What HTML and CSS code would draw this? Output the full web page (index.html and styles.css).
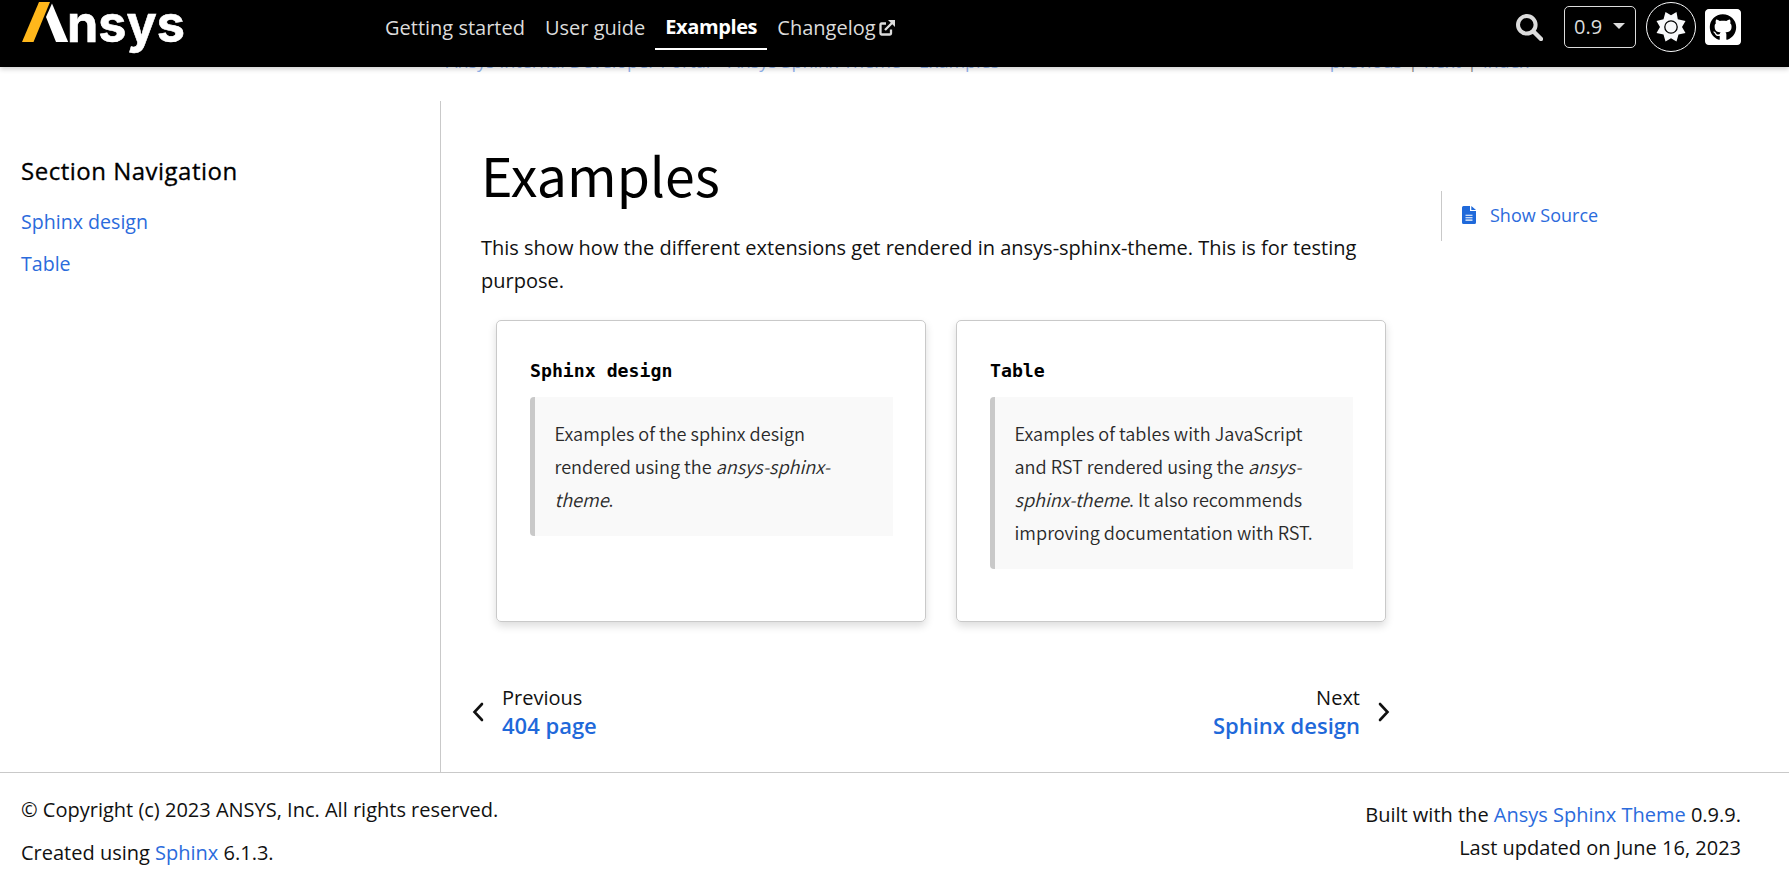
FILE: index.html
```html
<!DOCTYPE html>
<html lang="en">
<head>
<meta charset="utf-8">
<title>Examples — Ansys Sphinx Theme</title>
<link rel="stylesheet" href="styles.css">
</head>
<body>
<header class="header">
  <svg class="logo" width="166" height="56" viewBox="0 0 166 56" role="img" aria-label="Ansys">
    <path d="M17 2h11L11.500 42H0z" fill="#ffb71b"/>
    <path d="M30 3.500 46.200 42H34L24 17z" fill="#fff"/>
    <text class="logo-text" x="45" y="42" textLength="118" lengthAdjust="spacingAndGlyphs">nsys</text>
  </svg>
  <nav class="nav">
    <a class="nav-link"><span>Getting started</span></a>
    <a class="nav-link"><span>User guide</span></a>
    <a class="nav-link nav-active"><span>Examples</span></a>
    <a class="nav-link"><span>Changelog</span><svg class="ext" width="16" height="16" viewBox="0 0 16 16"><path d="M7 3.500H2.500q-1 0-1 1v9q0 1 1 1h8.500q1 0 1-1V9.500M6 10 13 3" fill="none" stroke="#dcdcdc" stroke-width="2.300"/><path d="M9 0h7v7z" fill="#dcdcdc"/></svg></a>
  </nav>
  <div class="tools">
    <svg class="search" width="27" height="27" viewBox="0 0 27 27"><circle cx="10.800" cy="10.800" r="8.800" fill="none" stroke="#dcdcdc" stroke-width="4"/><path d="M17.500 17.500 25 25" stroke="#dcdcdc" stroke-width="4.400" stroke-linecap="round"/></svg>
    <div class="version"><span>0.9</span><span class="caret"></span></div>
    <div class="theme"><svg width="30" height="30" viewBox="0 0 30 30"><path d="M15 3.200 20.500 0 21.800 7.200 29.500 9 26 15 29.500 21 22.500 22.500 20.500 29.500 15 26.200 9.500 29.500 7.500 22.500 .5 21 4 15 .5 9 7.500 7.200 9.500 0z" fill="#f8f9fa"/><circle cx="15" cy="15" r="6.200" fill="#f8f9fa" stroke="#000" stroke-width="1.300"/></svg></div>
    <svg class="github" width="37" height="37" viewBox="0 32 448 448"><path fill="#fff" d="M400 32H48C21.500 32 0 53.500 0 80v352c0 26.500 21.500 48 48 48h352c26.500 0 48-21.500 48-48V80c0-26.500-21.500-48-48-48zM277.300 415.700c-8.400 1.500-11.500-3.700-11.500-8 0-5.400.2-33 .2-55.300 0-15.600-5.200-25.500-11.300-30.700 37-4.100 76-9.200 76-73.100 0-18.200-6.500-27.300-17.100-39 1.700-4.300 7.400-22-1.700-45-13.900-4.300-45.700 17.900-45.700 17.900-13.200-3.700-27.500-5.600-41.600-5.600-14.100 0-28.400 1.900-41.600 5.600 0 0-31.800-22.200-45.700-17.900-9.100 22.900-3.500 40.600-1.700 45-10.600 11.700-15.600 20.800-15.600 39 0 63.600 37.300 69 74.300 73.100-4.800 4.300-9.100 11.700-10.600 22.300-9.500 4.300-33.800 11.700-48.300-13.900-9.100-15.800-25.500-17.100-25.500-17.100-16.200-.2-1.100 10.200-1.100 10.200 10.800 5 18.400 24.200 18.400 24.200 9.700 29.700 56.100 19.700 56.100 19.700 0 13.900.2 36.500.2 40.600 0 4.300-3 9.500-11.500 8-66-22.100-112.200-84.900-112.200-158.300 0-91.800 70.200-161.500 162-161.500S388 165.600 388 257.400c.1 73.400-44.700 136.300-110.700 158.300z"/></svg>
  </div>
</header>

<div class="related">
  <div class="crumbs"><a>Ansys Internal Developer Portal</a><a>Ansys Sphinx Theme</a><a>Examples</a></div>
  <div class="rel-links"><a>previous</a><span class="bar">|</span><a>next</a><span class="bar">|</span><a>index</a></div>
</div>

<div class="page">
  <aside class="sidebar">
    <p class="side-title">Section Navigation</p>
    <a class="side-link">Sphinx design</a>
    <a class="side-link">Table</a>
  </aside>
  <main class="main">
    <h1 class="title">Examples</h1>
    <p class="intro">This show how the different extensions get rendered in ansys-sphinx-theme. This is for testing purpose.</p>
    <div class="cards">
      <section class="card">
        <h2 class="card-title">Sphinx design</h2>
        <blockquote class="quote">Examples of the sphinx design<br>rendered using the <em>ansys-sphinx-<br>theme</em>.</blockquote>
      </section>
      <section class="card">
        <h2 class="card-title">Table</h2>
        <blockquote class="quote">Examples of tables with JavaScript<br>and RST rendered using the <em>ansys-<br>sphinx-theme</em>. It also recommends<br>improving documentation with RST.</blockquote>
      </section>
    </div>
    <div class="pager">
      <a class="pager-item"><svg width="12" height="20" viewBox="0 0 12 20"><path d="M10 2 2.500 10 10 18" fill="none" stroke="#111" stroke-width="2.600" stroke-linecap="round"/></svg>
        <span class="pager-text"><span class="pager-label">Previous</span><span class="pager-name">404 page</span></span></a>
      <a class="pager-item pager-next"><span class="pager-text"><span class="pager-label">Next</span><span class="pager-name">Sphinx design</span></span>
        <svg width="12" height="20" viewBox="0 0 12 20"><path d="M2 2 9.500 10 2 18" fill="none" stroke="#111" stroke-width="2.600" stroke-linecap="round"/></svg></a>
    </div>
  </main>
  <aside class="toc">
    <a class="source"><svg width="14" height="18" viewBox="0 0 14 18"><path d="M1.500 0H8v5h6v11.500q0 1.500-1.500 1.500h-11Q0 18 0 16.500v-15Q0 0 1.500 0zM9.300 0 14 4H9.300z" fill="#1f69da"/><path d="M3.500 9.300h7M3.500 11.700h7M3.500 14.100h7" stroke="#fff" stroke-width="1.100"/></svg><span>Show Source</span></a>
  </aside>
</div>

<footer class="footer">
  <div class="foot-left"><p>© Copyright (c) 2023 ANSYS, Inc. All rights reserved.</p><p>Created using <a>Sphinx</a> 6.1.3.</p></div>
  <div class="foot-right"><p>Built with the <a>Ansys Sphinx Theme</a> 0.9.9.</p><p>Last updated on June 16, 2023</p></div>
</footer>
</body>
</html>
```
FILE: styles.css
```css
* { box-sizing: border-box; }
body { margin: 0; height: 883px; overflow: hidden; background: #fff; color: #111; font: 20px/33px "Open Sans", sans-serif; }
p, h1, h2, blockquote { margin: 0; }
a { color: #2b6bdc; text-decoration: none; }

.header { position: relative; z-index: 2; display: flex; height: 67px; padding: 0 48px 0 22px; background: #000; box-shadow: 0 2px 5px rgba(0, 0, 0, .2); }
.logo { flex: none; display: block; overflow: visible; }
.logo-text { font: 700 52px Inter, sans-serif; fill: #fff; stroke: #fff; stroke-width: .6px; }
.nav { display: flex; align-items: flex-start; margin-left: 187px; }
.nav-link { display: flex; height: 50px; padding: 11px 10px 0; color: #dcdcdc; white-space: nowrap; }
.nav-active { width: 112px; padding: 10px 0 0 10px; color: #fff; font-weight: 700; letter-spacing: -.4px; border-bottom: 2px solid #fff; }
.ext { margin: 9px 0 0 3px; }
.tools { display: flex; margin-left: auto; align-items: flex-start; }
.search { margin: 14px 21px 0 0; }
.version { display: flex; align-items: center; justify-content: space-between; width: 72px; height: 42px; margin: 6px 10px 0 0; padding: 0 10px 2px 9px; border: 1px solid #dcdcdc; border-radius: 5px; color: #dcdcdc; }
.caret { border: 6px solid transparent; border-top-color: #dcdcdc; border-bottom: 0; }
.theme { display: flex; align-items: center; justify-content: center; width: 50px; height: 50px; margin: 2px 9px 0 0; border: 1px solid #f8f9fa; border-radius: 50%; }
.github { width: 36px; height: 36px; margin-top: 9px; }

.related { display: flex; justify-content: space-between; height: 23px; margin: -18px 0 12px; padding: 0 260px 0 446px; overflow: hidden; font-size: 18px; line-height: 24px; opacity: .5; }
.crumbs, .rel-links { display: flex; }
.crumbs { gap: 18px; }
.rel-links { gap: 6px; }
.bar { color: #111; }

.page { display: grid; grid-template-columns: 441px 1000px 1fr; height: 688px; padding-top: 17px; }
.sidebar { border-right: 1px solid #c9c9c9; padding: 52px 21px 0; }
.side-title { margin-bottom: 16px; color: #000; font-size: 24px; font-weight: 500; letter-spacing: .5px; line-height: 36px; white-space: nowrap; -webkit-text-stroke: .3px #000; }
.side-link { display: block; margin-bottom: 9px; font-size: 19.600px; }
.main { padding: 34px 0 0 40px; }
.title { height: 96px; color: #000; font: 400 53.600px/78px "Noto Sans CJK SC", sans-serif; }
.intro { width: 900px; }
.cards { display: grid; grid-template-columns: 430px 430px; gap: 30px; margin: 23px 0 0 15px; }
.card { height: 302px; padding: 33px 32px 33px 33px; border: 1px solid #c9c9c9; border-radius: 5px; box-shadow: 0 4px 8px rgba(0, 0, 0, .14); }
.card-title { height: 43px; color: #000; font: 700 18.200px/34px "DejaVu Sans Mono", monospace; }
.quote { padding: 20px 0 20px 19.500px; border-left: 5px solid #c9c9c9; border-radius: 4px 0 0 4px; background: #f9f9f9; color: #2a2a2a; font: 350 18.100px/33px "Noto Sans CJK SC", sans-serif; white-space: nowrap; }
.pager { display: flex; justify-content: space-between; width: 918px; margin: 62px 0 0 -9px; }
.pager-item { display: flex; align-items: center; gap: 18px; }
.pager-text { display: flex; flex-direction: column; line-height: 28px; }
.pager-next .pager-text { text-align: right; }
.pager-label { color: #111; }
.pager-name { margin-top: -1px; font-size: 22px; font-weight: 600; color: #1f69da; }
.toc { padding-top: 90px; }
.source { display: flex; align-items: center; gap: 14px; height: 50px; padding: 0 0 2px 20px; border-left: 1px solid #c9c9c9; font-size: 18px; }

.footer { display: flex; justify-content: space-between; border-top: 1px solid #c9c9c9; padding: 20px 48px 0 21px; }
.foot-left p { margin-bottom: 10px; }
.foot-right { padding-top: 5px; text-align: right; }
```
